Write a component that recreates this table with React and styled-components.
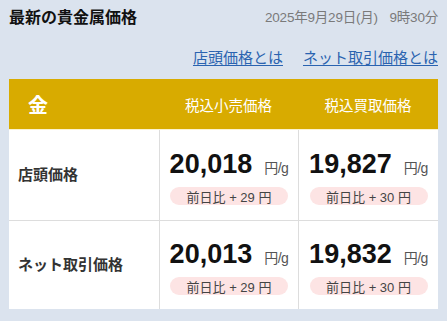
import React from "react";
import styled, { createGlobalStyle } from "styled-components";

const Global = createGlobalStyle`
  html, body { margin: 0; padding: 0; }
  body {
    background: #dbe3ee;
    font-family: "Liberation Sans", Arial, "Noto Sans CJK JP", sans-serif;
    width: 447px;
    height: 321px;
    overflow: hidden;
  }
`;

const Page = styled.div`
  padding: 5px 9px 0 9px;
`;

const TitleRow = styled.div`
  display: flex;
  justify-content: space-between;
  align-items: center;
  height: 22px;
`;

const Title = styled.h1`
  margin: 0;
  font-family: "Noto Sans CJK JP", sans-serif;
  font-size: 16px;
  font-weight: 700;
  color: #111;
`;

const DateText = styled.div`
  font-family: "Liberation Sans", "Noto Sans CJK JP", sans-serif;
  font-size: 13.5px;
  color: #7a7a7a;
  letter-spacing: -0.2px;
  word-spacing: 8px;
`;

const Links = styled.div`
  display: flex;
  justify-content: flex-end;
  gap: 20px;
  margin-top: 18px;
  height: 22px;
  align-items: center;
`;

const Link = styled.a`
  font-family: "Noto Sans CJK JP", sans-serif;
  font-size: 15px;
  color: #2a63b0;
  text-decoration: underline;
  text-underline-offset: 2px;
`;

const Table = styled.div`
  margin-top: 12px;
  display: grid;
  grid-template-columns: 150px 139px 140px;
  background: #fff;
`;

const HeadCell = styled.div`
  background: #d8ab00;
  height: 50px;
  display: flex;
  align-items: center;
  justify-content: ${(p) => (p.$left ? "flex-start" : "center")};
  padding-left: ${(p) => (p.$left ? "19px" : "0")};
  color: #fff;
  font-family: "Noto Sans CJK JP", sans-serif;
  font-size: ${(p) => (p.$left ? "20px" : "14.5px")};
  font-weight: ${(p) => (p.$left ? 700 : 400)};
  border-bottom: 1px solid #fbf3cf;
`;

const LabelCell = styled.div`
  height: ${(p) => p.$h}px;
  display: flex;
  align-items: center;
  padding: 0 0 3px 9px;
  box-sizing: border-box;
  font-family: "Noto Sans CJK JP", sans-serif;
  font-size: 15px;
  font-weight: 700;
  color: #333;
  border-bottom: ${(p) => (p.$last ? "none" : "1px solid #ddd")};
`;

const PriceCell = styled.div`
  height: ${(p) => p.$h}px;
  display: flex;
  flex-direction: column;
  justify-content: center;
  align-items: center;
  gap: 7px;
  padding: 3px 10px 0 10px;
  border-left: 1px solid #ddd;
  border-bottom: ${(p) => (p.$last ? "none" : "1px solid #ddd")};
  box-sizing: border-box;
`;

const PriceLine = styled.div`
  display: flex;
  align-items: baseline;
  justify-content: center;
  width: 100%;
`;

const Number = styled.span`
  font-family: "Liberation Sans", Arial, sans-serif;
  font-size: 27px;
  font-weight: 700;
  color: #111;
  line-height: 32px;
`;

const Unit = styled.span`
  margin-left: 12px;
  font-family: "Liberation Sans", "Noto Sans CJK JP", sans-serif;
  font-size: 14px;
  color: #555;
  letter-spacing: -0.5px;
`;

const Badge = styled.div`
  width: 118px;
  height: 18px;
  border-radius: 9px;
  background: #fde4e4;
  display: flex;
  align-items: center;
  justify-content: center;
  font-family: "Liberation Sans", "Noto Sans CJK JP", sans-serif;
  font-size: 13px;
  color: #444;
  white-space: pre;
`;

const rows = [
  { label: "店頭価格", h: 91, cells: [["20,018", "+ 29"], ["19,827", "+ 30"]] },
  { label: "ネット取引価格", h: 88, cells: [["20,013", "+ 29"], ["19,832", "+ 30"]], last: true },
];

export default function App() {
  return (
    <>
      <Global />
      <Page>
        <TitleRow>
          <Title>最新の貴金属価格</Title>
          <DateText>2025年9月29日(月) 9時30分</DateText>
        </TitleRow>
        <Links>
          <Link href="#">店頭価格とは</Link>
          <Link href="#">ネット取引価格とは</Link>
        </Links>
        <Table>
          <HeadCell $left>金</HeadCell>
          <HeadCell>税込小売価格</HeadCell>
          <HeadCell>税込買取価格</HeadCell>
          {rows.map((r) => (
            <React.Fragment key={r.label}>
              <LabelCell $h={r.h} $last={r.last}>{r.label}</LabelCell>
              {r.cells.map(([n, d], i) => (
                <PriceCell key={i} $h={r.h} $last={r.last}>
                  <PriceLine>
                    <Number>{n}</Number>
                    <Unit>円/g</Unit>
                  </PriceLine>
                  <Badge>{`前日比 ${d} 円`}</Badge>
                </PriceCell>
              ))}
            </React.Fragment>
          ))}
        </Table>
      </Page>
    </>
  );
}
